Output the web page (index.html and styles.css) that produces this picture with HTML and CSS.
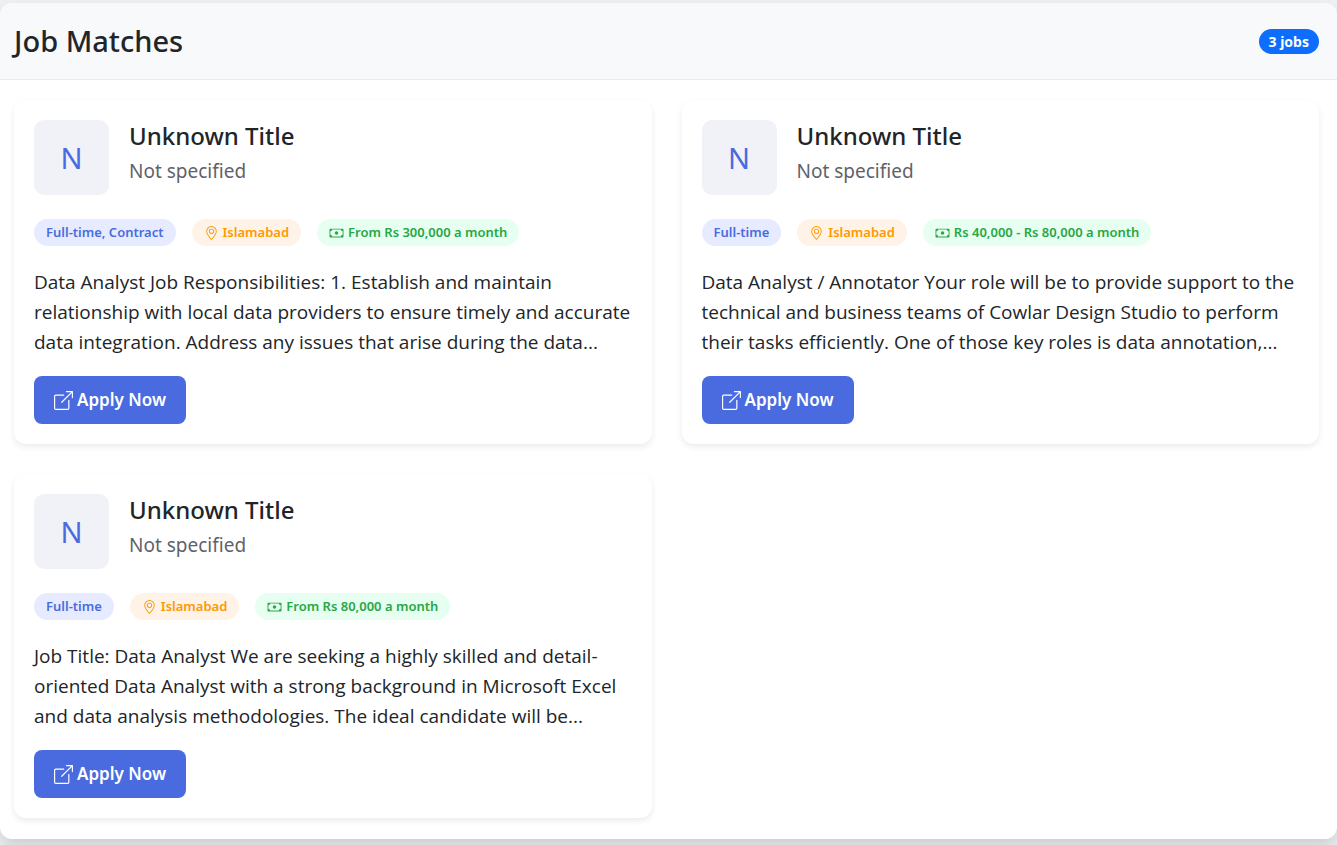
FILE: index.html
```html
<!DOCTYPE html>
<html lang="en">
<head>
<meta charset="utf-8">
<meta name="viewport" content="width=device-width, initial-scale=1">
<title>Job Matches</title>
<link rel="stylesheet" href="styles.css">
</head>
<body>
<svg class="sprite" aria-hidden="true">
  <symbol id="pin" viewBox="0 0 16 16"><path d="M12.166 8.94c-.524 1.062-1.234 2.12-1.96 3.07A32 32 0 0 1 8 14.58a32 32 0 0 1-2.206-2.57c-.726-.95-1.436-2.008-1.96-3.07C3.304 7.867 3 6.862 3 6a5 5 0 0 1 10 0c0 .862-.305 1.867-.834 2.94M8 16s6-5.686 6-10A6 6 0 0 0 2 6c0 4.314 6 10 6 10"/><path d="M8 8a2 2 0 1 1 0-4 2 2 0 0 1 0 4m0 1a3 3 0 1 0 0-6 3 3 0 0 0 0 6"/></symbol>
  <symbol id="cash" viewBox="0 0 16 16"><path d="M8 10a2 2 0 1 0 0-4 2 2 0 0 0 0 4"/><path d="M0 4a1 1 0 0 1 1-1h14a1 1 0 0 1 1 1v8a1 1 0 0 1-1 1H1a1 1 0 0 1-1-1zm3 0a2 2 0 0 1-2 2v4a2 2 0 0 1 2 2h10a2 2 0 0 1 2-2V6a2 2 0 0 1-2-2z"/></symbol>
  <symbol id="open" viewBox="0 0 16 16"><path d="M8.636 3.5a.5.5 0 0 0-.5-.5H1.5A1.5 1.5 0 0 0 0 4.5v10A1.5 1.5 0 0 0 1.5 16h10a1.5 1.5 0 0 0 1.5-1.5V7.864a.5.5 0 0 0-1 0V14.5a.5.5 0 0 1-.5.5h-10a.5.5 0 0 1-.5-.5v-10a.5.5 0 0 1 .5-.5h6.636a.5.5 0 0 0 .5-.5"/><path d="M16 .5a.5.5 0 0 0-.5-.5h-5a.5.5 0 0 0 0 1h3.793L6.146 9.146a.5.5 0 1 0 .708.708L15 1.707V5.5a.5.5 0 0 0 1 0z"/></symbol>
</svg>
<main class="panel">
  <header class="panel-header">
    <h1 class="panel-title">Job Matches</h1>
    <span class="count">3 jobs</span>
  </header>
  <div class="jobs">
    <article class="card">
      <div class="card-head">
        <div class="logo">N</div>
        <div>
          <h2 class="job-title">Unknown Title</h2>
          <p class="company">Not specified</p>
        </div>
      </div>
      <div class="tags">
        <span class="tag tag-type">Full-time, Contract</span>
        <span class="tag tag-place"><svg class="tag-icon"><use href="#pin"/></svg>Islamabad</span>
        <span class="tag tag-pay"><svg class="tag-icon"><use href="#cash"/></svg>From Rs 300,000 a month</span>
      </div>
      <p class="description">Data Analyst Job Responsibilities: 1. Establish and maintain relationship with local data providers to ensure timely and accurate data integration. Address any issues that arise during the data...</p>
      <a class="apply" href="#"><svg class="apply-icon"><use href="#open"/></svg>Apply Now</a>
    </article>
    <article class="card">
      <div class="card-head">
        <div class="logo">N</div>
        <div>
          <h2 class="job-title">Unknown Title</h2>
          <p class="company">Not specified</p>
        </div>
      </div>
      <div class="tags">
        <span class="tag tag-type">Full-time</span>
        <span class="tag tag-place"><svg class="tag-icon"><use href="#pin"/></svg>Islamabad</span>
        <span class="tag tag-pay"><svg class="tag-icon"><use href="#cash"/></svg>Rs 40,000 - Rs 80,000 a month</span>
      </div>
      <p class="description">Data Analyst / Annotator Your role will be to provide support to the technical and business teams of Cowlar Design Studio to perform their tasks efficiently. One of those key roles is data annotation,...</p>
      <a class="apply" href="#"><svg class="apply-icon"><use href="#open"/></svg>Apply Now</a>
    </article>
    <article class="card">
      <div class="card-head">
        <div class="logo">N</div>
        <div>
          <h2 class="job-title">Unknown Title</h2>
          <p class="company">Not specified</p>
        </div>
      </div>
      <div class="tags">
        <span class="tag tag-type">Full-time</span>
        <span class="tag tag-place"><svg class="tag-icon"><use href="#pin"/></svg>Islamabad</span>
        <span class="tag tag-pay"><svg class="tag-icon"><use href="#cash"/></svg>From Rs 80,000 a month</span>
      </div>
      <p class="description">Job Title: Data Analyst We are seeking a highly skilled and detail-oriented Data Analyst with a strong background in Microsoft Excel and data analysis methodologies. The ideal candidate will be...</p>
      <a class="apply" href="#"><svg class="apply-icon"><use href="#open"/></svg>Apply Now</a>
    </article>
  </div>
</main>
</body>
</html>
```
FILE: styles.css
```css
* { box-sizing: border-box; }

body {
  display: flex;
  flex-direction: column;
  min-height: 100vh;
  margin: 0;
  padding: 3px 0 6px;
  background: #f0f1f3;
  color: #212529;
  font-family: "Segoe UI", "Noto Sans", "Open Sans", sans-serif;
  font-size: 19px;
  line-height: 30px;
}

h1, h2, p { margin: 0; }

.sprite { display: none; }

.panel {
  flex: 1;
  background: #fff;
  border-radius: 12px;
  box-shadow: 0 8px 16px rgba(0, 0, 0, 0.15);
  overflow: hidden;
}

.panel-header {
  display: flex;
  align-items: center;
  justify-content: space-between;
  padding: 20px 18px 20px 14px;
  background: #f8f9fb;
  border-bottom: 1px solid #e9ebee;
}

.panel-title {
  font-size: 29px;
  font-weight: 500;
  line-height: 36px;
}

.count {
  padding: 0 10px;
  border-radius: 13px;
  background: #0d6efd;
  color: #fff;
  font-size: 14px;
  font-weight: 700;
  line-height: 25px;
}

.jobs {
  display: grid;
  grid-template-columns: repeat(2, minmax(0, 1fr));
  gap: 30px;
  padding: 20px 18px 20px 14px;
}

.card {
  padding: 20px;
  border-radius: 12px;
  background: #fff;
  box-shadow: 0 3px 6px rgba(0, 0, 0, 0.08);
}

.card-head {
  display: flex;
  gap: 20px;
}

.logo {
  display: flex;
  align-items: center;
  justify-content: center;
  width: 75px;
  height: 75px;
  border-radius: 10px;
  background: #f1f2f8;
  color: #4a6bdf;
  font-size: 29px;
}

.job-title {
  margin-bottom: 4px;
  font-size: 24px;
  font-weight: 500;
  line-height: 32px;
}

.company { color: #5f6368; }

.tags {
  display: flex;
  flex-wrap: wrap;
  gap: 16px;
  margin: 24px 0 21px;
}

.tag {
  display: flex;
  align-items: center;
  gap: 4px;
  padding: 0 12px;
  border-radius: 14px;
  font-size: 13px;
  font-weight: 600;
  line-height: 27px;
}

.tag-icon {
  width: 15px;
  height: 14px;
  fill: currentColor;
}

.tag-type { background: #e6ebff; color: #4a6bdf; }
.tag-place { background: #fff2e6; color: #ff9800; }
.tag-pay { background: #e6fff0; color: #28a745; }

.description {
  margin-bottom: 19px;
  font-family: "Segoe UI", "Open Sans", "Noto Sans", sans-serif;
}

.apply {
  display: inline-flex;
  align-items: center;
  gap: 4px;
  padding: 9px 20px;
  border-radius: 8px;
  background: #4a6bdf;
  color: #fff;
  font-size: 17px;
  font-weight: 600;
  text-decoration: none;
  vertical-align: top;
}

.apply-icon {
  width: 19px;
  height: 19px;
  fill: currentColor;
}
```
